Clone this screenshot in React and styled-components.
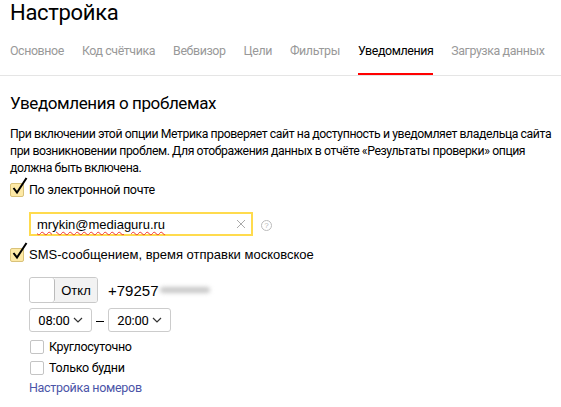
import React from 'react';
import styled, { createGlobalStyle } from 'styled-components';

const GlobalStyle = createGlobalStyle`
  body {
    margin: 0;
    background: #fff;
    font-family: Roboto, 'Noto Sans', sans-serif;
    color: #000;
  }
`;

const Page = styled.div`
  width: 561px;
  height: 407px;
  overflow: hidden;
`;

const Title = styled.h1`
  margin: 0;
  padding: 0 10px;
  font-size: 22px;
  font-weight: 400;
  line-height: 26px;
  height: 26px;
  letter-spacing: -0.3px;
`;

const Tabs = styled.nav`
  display: flex;
  gap: 18px;
  padding: 0 10px;
  margin-top: 15px;
  border-bottom: 1px solid #e5e5e5;
`;

const Tab = styled.div`
  font-size: 12.4px;
  letter-spacing: -0.4px;
  line-height: 20px;
  padding-bottom: 12px;
  color: ${p => (p.active ? '#000' : '#999')};
  border-bottom: 2px solid ${p => (p.active ? '#f00' : 'transparent')};
  white-space: nowrap;
`;

const Section = styled.section`
  padding: 0 10px;
`;

const Heading = styled.h2`
  margin: 16px 0 0;
  font-size: 17px;
  font-weight: 400;
  line-height: 22px;
  letter-spacing: -0.4px;
`;

const Text = styled.p`
  margin: 12px 0 0;
  font-size: 12.25px;
  letter-spacing: -0.42px;
  line-height: 17px;
  width: 545px;
`;

const CheckRow = styled.label`
  display: flex;
  align-items: center;
  gap: 5px;
  margin-top: ${p => p.top || 0}px;
  font-size: ${p => (p.arial ? 13 : 12.5)}px;
  letter-spacing: ${p => (p.arial ? 0 : -0.3)}px;
  line-height: 18px;
  font-family: ${p => (p.arial ? "'Liberation Sans', Arial, sans-serif" : 'inherit')};
  padding-left: ${p => p.indent || 0}px;
`;

const Box = styled.span`
  position: relative;
  width: 12px;
  height: 12px;
  flex: none;
  border-radius: 2px;
  border: 1px solid ${p => (p.checked ? '#d9c27a' : '#c4c4c4')};
  background: ${p => (p.checked ? '#fde9a6' : '#fff')};
`;

const Tick = styled.svg`
  position: absolute;
  left: 1px;
  top: -7px;
`;

const Checkbox = ({ checked }) => (
  <Box checked={checked}>
    {checked && (
      <Tick width="16" height="18" viewBox="0 0 16 18">
        <path d="M1.5 11 L5 15.5 L14.5 1" fill="none" stroke="#000" strokeWidth="2" />
      </Tick>
    )}
  </Box>
);

const Nested = styled.div`
  padding-left: 19px;
`;

const InputRow = styled.div`
  display: flex;
  align-items: center;
  gap: 8px;
  margin-top: 13px;
`;

const Input = styled.div`
  width: 209px;
  height: 20px;
  border: 2px solid #ffdb4d;
  display: flex;
  align-items: center;
  justify-content: space-between;
  padding: 0 5px 0 6px;
  font-family: 'Liberation Sans', Arial, sans-serif;
  font-size: 13px;
`;

const Email = styled.span`
  text-decoration: underline wavy #e33;
  text-decoration-thickness: 1px;
  text-underline-offset: 2px;
`;

const Help = styled.span`
  width: 9px;
  height: 9px;
  border: 1px solid #bbb;
  border-radius: 50%;
  color: #bbb;
  font-size: 8px;
  line-height: 9px;
  text-align: center;
  font-family: 'Liberation Sans', Arial, sans-serif;
  margin-top: 2px;
`;

const PhoneRow = styled.div`
  display: flex;
  align-items: center;
  gap: 10px;
  margin-top: 13px;
`;

const Toggle = styled.div`
  display: flex;
  height: 24px;
  border: 1px solid #c9c9c9;
  border-radius: 3px;
  overflow: hidden;
  font-family: 'Liberation Sans', Arial, sans-serif;
  font-size: 13px;
`;

const Knob = styled.div`
  width: 24px;
  background: #fff;
  border-right: 1px solid #bbb;
  border-radius: 3px;
`;

const Off = styled.div`
  width: 42px;
  background: #f2f2f2;
  display: flex;
  align-items: center;
  justify-content: center;
`;

const Phone = styled.div`
  display: flex;
  align-items: center;
  font-size: 15px;
  font-family: 'Liberation Sans', Arial, sans-serif;
`;

const Blur = styled.span`
  display: inline-block;
  width: 50px;
  height: 6px;
  margin-left: 2px;
  border-radius: 3px;
  background: #c8c8c8;
  filter: blur(2px);
`;

const TimeRow = styled.div`
  display: flex;
  align-items: center;
  gap: 4px;
  margin-top: 5px;
`;

const Select = styled.div`
  width: 61px;
  height: 22px;
  border: 1px solid #ccc;
  border-radius: 3px;
  display: flex;
  align-items: center;
  justify-content: center;
  gap: 3px;
  font-size: 13px;
  letter-spacing: -0.2px;
`;

const Dash = styled.span`
  width: 8px;
  height: 1px;
  background: #000;
  margin: 2px 0 0;
`;

const Link = styled.a`
  display: block;
  margin-top: 2px;
  font-size: 12.5px;
  letter-spacing: -0.3px;
  line-height: 18px;
  color: #4b55a8;
  text-decoration: none;
`;

const Chevron = () => (
  <svg width="10" height="6" viewBox="0 0 10 6">
    <path d="M1 1 L5 5 L9 1" fill="none" stroke="#333" strokeWidth="1.2" />
  </svg>
);

const tabs = ['Основное', 'Код счётчика', 'Вебвизор', 'Цели', 'Фильтры', 'Уведомления', 'Загрузка данных'];

export default function App() {
  return (
    <Page>
      <GlobalStyle />
      <Title>Настройка</Title>
      <Tabs>
        {tabs.map(t => (
          <Tab key={t} active={t === 'Уведомления'}>{t}</Tab>
        ))}
      </Tabs>
      <Section>
        <Heading>Уведомления о проблемах</Heading>
        <Text>
          При включении этой опции Метрика проверяет сайт на доступность и уведомляет владельца сайта
          при возникновении проблем. Для отображения данных в отчёте «Результаты проверки» опция
          должна быть включена.
        </Text>
        <CheckRow top={4}>
          <Checkbox checked />
          По электронной почте
        </CheckRow>
        <Nested>
          <InputRow>
            <Input>
              <Email>mrykin@mediaguru.ru</Email>
              <svg width="10" height="10" viewBox="0 0 10 10">
                <path d="M1 1 L9 9 M9 1 L1 9" stroke="#aaa" strokeWidth="1" />
              </svg>
            </Input>
            <Help>?</Help>
          </InputRow>
        </Nested>
        <CheckRow top={10} arial>
          <Checkbox checked />
          SMS-сообщением, время отправки московское
        </CheckRow>
        <Nested>
          <PhoneRow>
            <Toggle>
              <Knob />
              <Off>Откл</Off>
            </Toggle>
            <Phone>
              +79257<Blur />
            </Phone>
          </PhoneRow>
          <TimeRow>
            <Select>08:00<Chevron /></Select>
            <Dash />
            <Select>20:00<Chevron /></Select>
          </TimeRow>
          <CheckRow top={6} indent={1}>
            <Checkbox />
            Круглосуточно
          </CheckRow>
          <CheckRow top={3} indent={1}>
            <Checkbox />
            Только будни
          </CheckRow>
          <Link href="#">Настройка номеров</Link>
        </Nested>
      </Section>
    </Page>
  );
}
